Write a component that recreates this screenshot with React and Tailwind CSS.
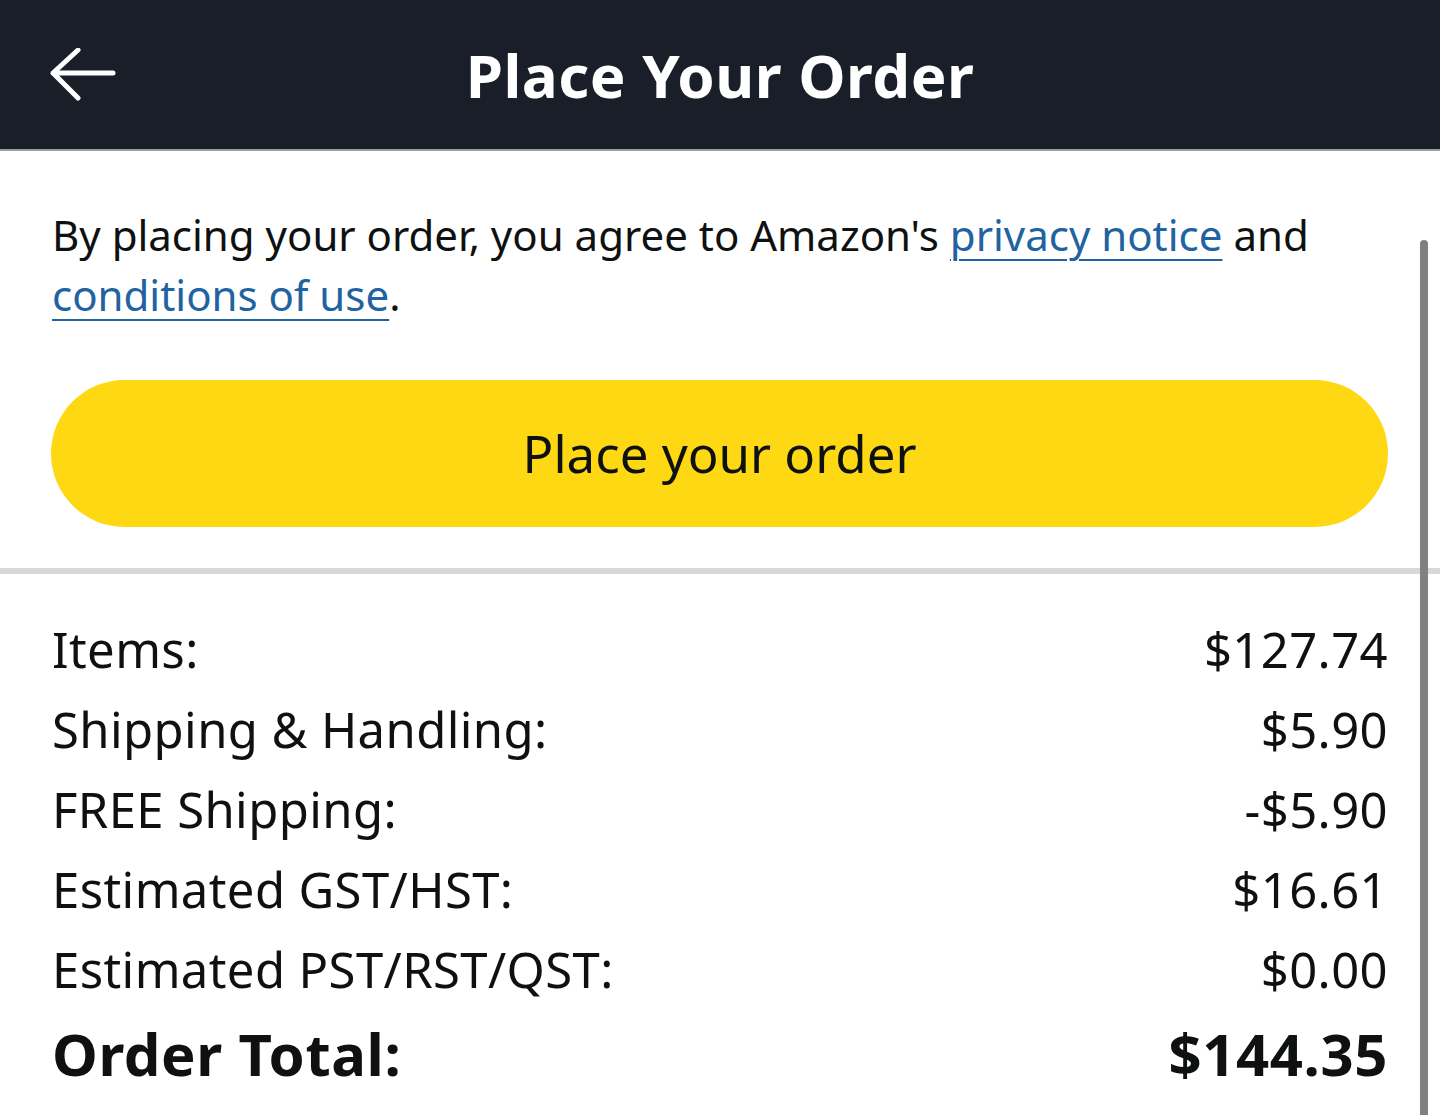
export default function App() {
  const rows = [
    ['Items:', '$127.74'],
    ['Shipping & Handling:', '$5.90'],
    ['FREE Shipping:', '-$5.90'],
    ['Estimated GST/HST:', '$16.61'],
    ['Estimated PST/RST/QST:', '$0.00'],
  ]

  return (
    <div className="relative h-[1115px] w-[1440px] overflow-hidden bg-white font-['Noto_Sans',sans-serif] text-[#0f1111]">
      <header className="flex h-[151px] items-center border-b-2 border-[#9aa0a6] bg-[#191e28] px-[50px]">
        <svg width="66" height="54" viewBox="0 0 66 54" className="shrink-0" fill="none" stroke="white" strokeWidth="5" strokeLinecap="round" strokeLinejoin="round">
          <path d="M3 25H63M28 2L3 25L28 50" />
        </svg>
        <h1 className="-ml-[66px] flex-1 text-center text-[60px] font-bold tracking-[0.5px] text-white">Place Your Order</h1>
      </header>

      <main className="pr-[52px]">
        <p className="pl-[52px] pt-[54px] text-[42px] leading-[60px]">
          By placing your order, you agree to Amazon's{' '}
          <a className="text-[#2162a1] underline decoration-2 underline-offset-[8px]">privacy notice</a> and{' '}
          <a className="text-[#2162a1] underline decoration-2 underline-offset-[8px]">conditions of use</a>.
        </p>

        <div className="pl-[51px] pt-[55px]">
          <button className="flex h-[147px] w-full items-center justify-center rounded-full bg-[#ffd814] text-[51px] text-[#0f1111]">
            Place your order
          </button>
        </div>
      </main>

      <div className="mt-[41px] h-[6px] w-full bg-[#d5d9d9]" />

      <section className="px-[52px] pt-[36px]">
        {rows.map(([k, v]) => (
          <div key={k} className="flex h-[80px] items-center justify-between text-[49px] tracking-[0.4px]">
            <span>{k}</span>
            <span>{v}</span>
          </div>
        ))}
        <div className="flex h-[86px] items-center justify-between text-[58px] font-bold tracking-[0.6px]">
          <span>Order Total:</span>
          <span>$144.35</span>
        </div>
      </section>

      <div className="absolute right-[12px] top-[240px] h-[900px] w-[8px] rounded-full bg-[#808080]" />
    </div>
  )
}
